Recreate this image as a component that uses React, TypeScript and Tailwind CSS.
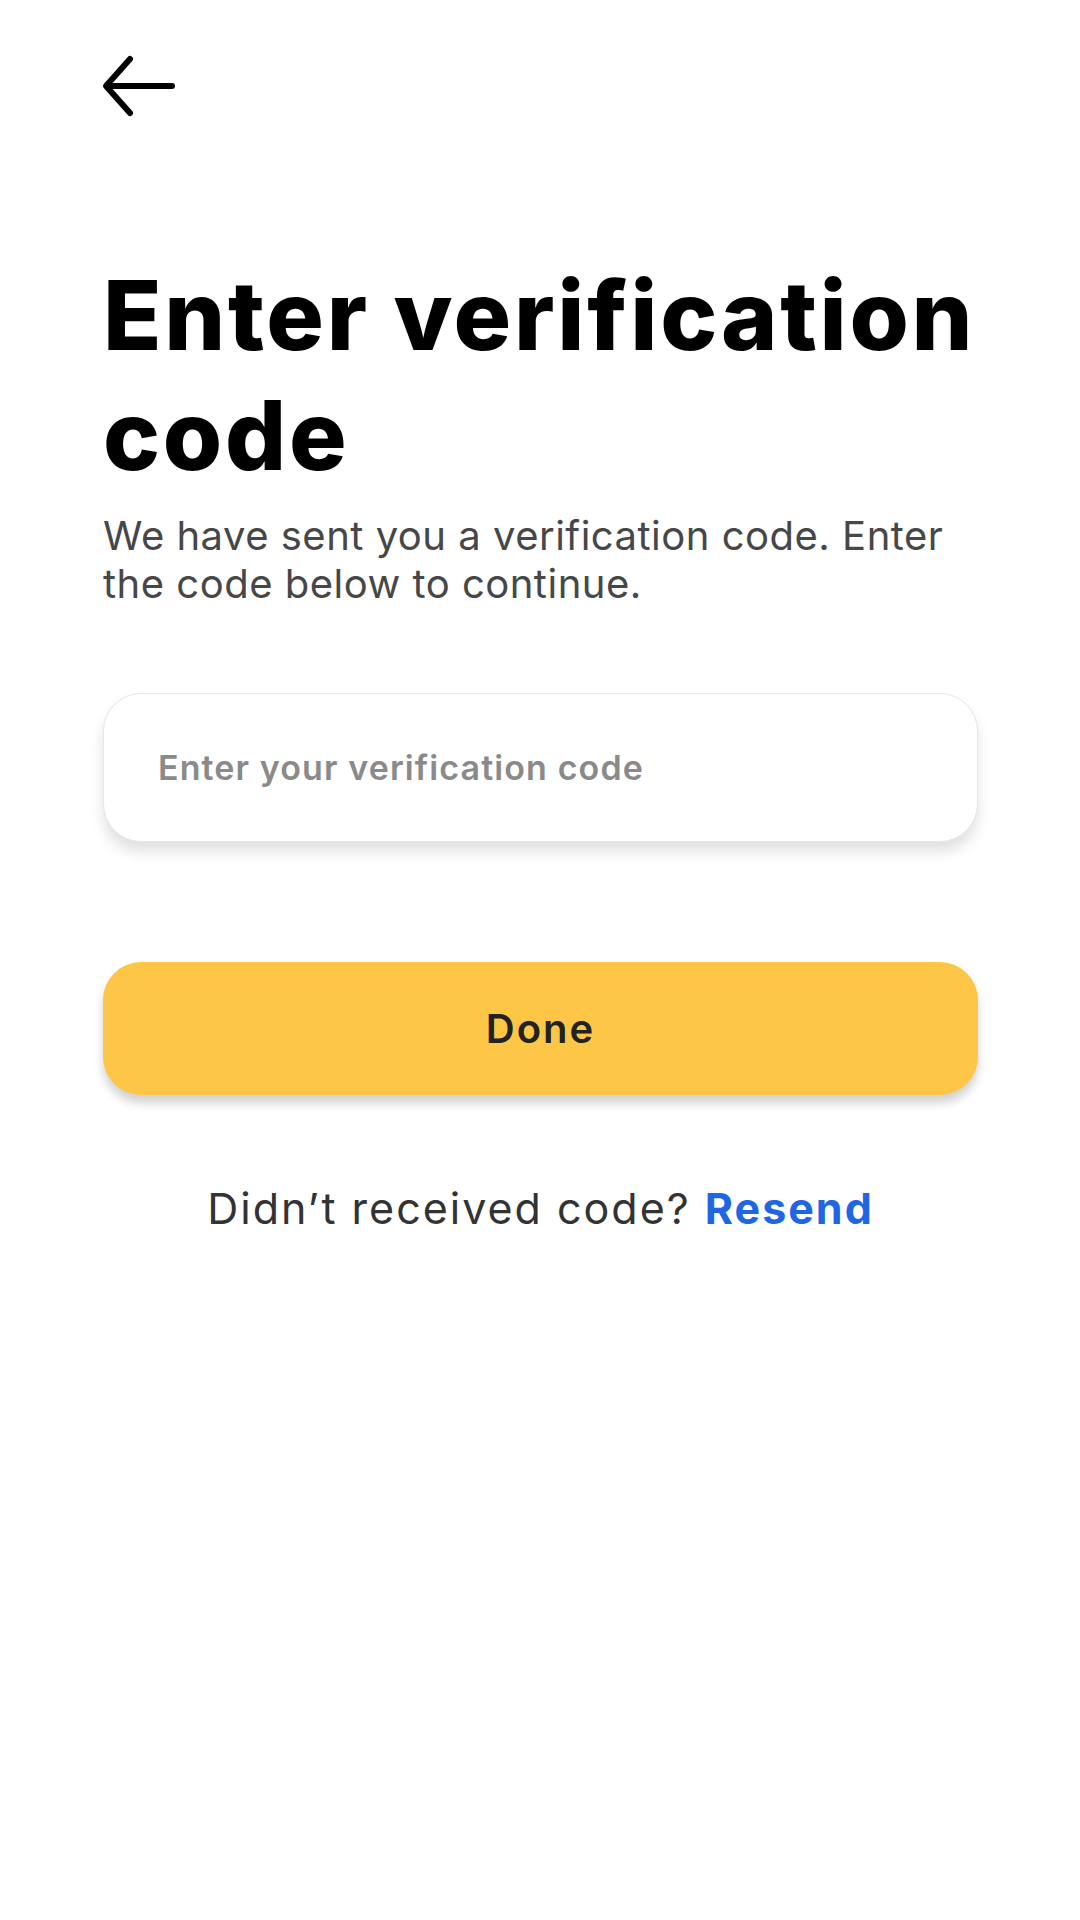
import React from "react";

export default function App() {
  return (
    <div className="w-[1080px] h-[1920px] bg-white flex flex-col pl-[103px] pr-[102px]" style={{ fontFamily: "Inter, 'Noto Sans', sans-serif" }}>
      <div className="pt-[50px]">
        <svg width="80" height="70" viewBox="0 0 80 70" className="block -ml-[3px]">
          <path d="M72 36 H7 M30 9 L6 36 L30 63" fill="none" stroke="#000" strokeWidth="6" strokeLinecap="round" strokeLinejoin="round" />
        </svg>
      </div>
      <h1 className="mt-[135px] text-[96px] leading-[120px] font-extrabold text-black tracking-[2.7px]">
        Enter verification code
      </h1>
      <p className="mt-[17px] text-[40px] leading-[48px] text-[#474747] tracking-[0.5px]">
        We have sent you a verification code. Enter the code below to continue.
      </p>
      <div className="mt-[85px] h-[149px] rounded-[38px] border border-[#e6e6e6] bg-white shadow-[0_10px_14px_rgba(0,0,0,0.12)] flex items-center pl-[54px]">
        <span className="text-[34px] font-semibold text-[#8a8a8a] tracking-[1.1px]">Enter your verification code</span>
      </div>
      <button className="mt-[120px] h-[133px] rounded-[38px] bg-[#fdc647] shadow-[0_8px_10px_rgba(0,0,0,0.18)] flex items-center justify-center">
        <span className="text-[40px] font-semibold text-[#222] tracking-[2px]">Done</span>
      </button>
      <p className="mt-[87px] text-center text-[43px] leading-[52px] text-[#333] tracking-[2px]">
        Didn’t received code? <span className="font-bold text-[#1f66e5]">Resend</span>
      </p>
    </div>
  );
}
